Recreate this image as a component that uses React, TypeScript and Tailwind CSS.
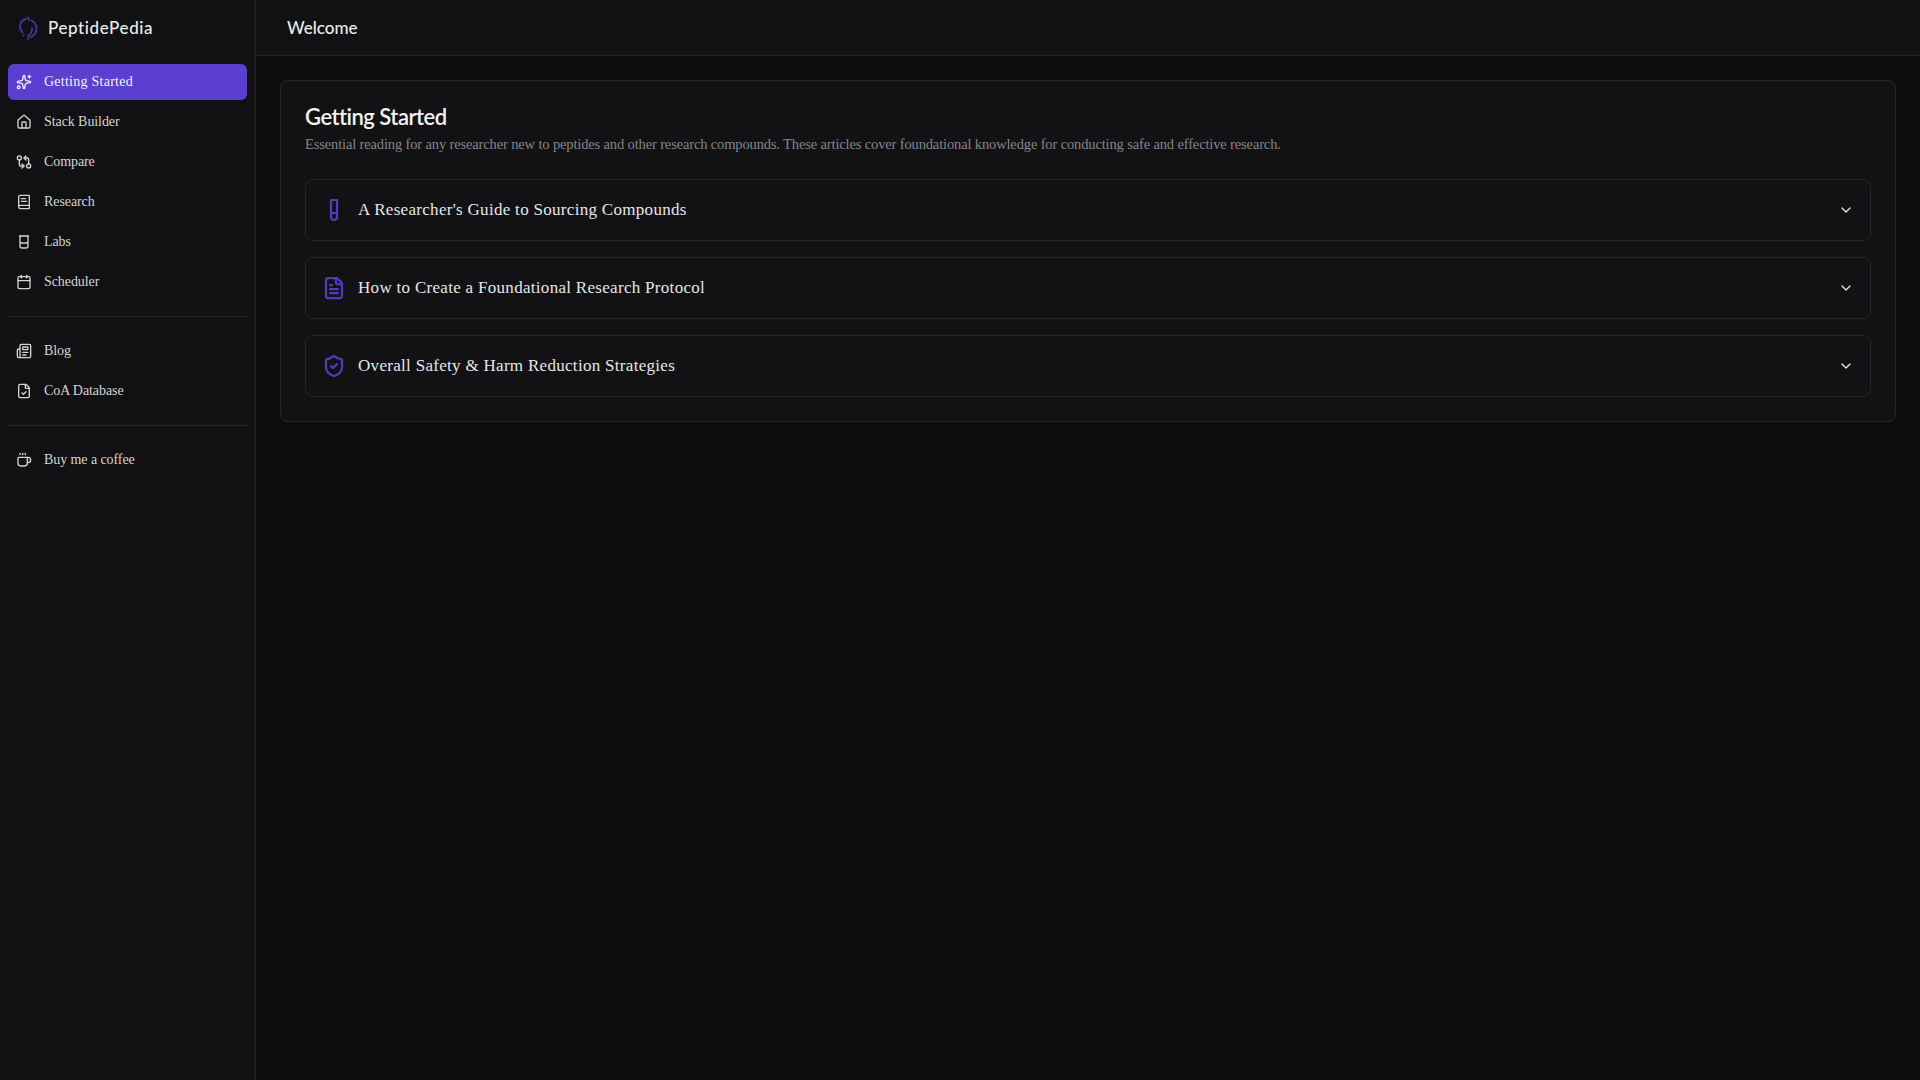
import {
  BookText,
  ChevronDown,
  Coffee,
  FileCheck,
  FileText,
  GitCompareArrows,
  House,
  Newspaper,
  Calendar,
  ShieldCheck,
  Sparkles,
} from 'lucide-react'

const serif = 'font-["Liberation_Serif",serif]'
const display = 'font-["Lato",sans-serif]'

function LabsIcon({ className }: { className?: string }) {
  return (
    <svg viewBox="0 0 16 16" fill="none" stroke="currentColor" strokeWidth="1.3" className={className}>
      <path d="M3 2h10M4 2v10a2 2 0 0 0 2 2h4a2 2 0 0 0 2-2V2M4 9h8" />
    </svg>
  )
}

function TubeIcon() {
  return (
    <svg viewBox="0 0 10 24" fill="none" stroke="currentColor" strokeWidth="2.2" className="w-[10px] h-[24px] text-[#4f3bbd]">
      <path d="M1 2h8M2 2v17a3 3 0 0 0 6 0V2M2 15h6" />
    </svg>
  )
}

function Logo() {
  return (
    <svg viewBox="0 0 20 24" fill="none" stroke="#45359f" strokeWidth="1.9" strokeLinecap="round" className="w-[20px] h-[24px]">
      <path d="M8 3C4 4 2 7 2 10.500c0 2.500 1 4.500 2.500 6" />
      <path d="M10 1.500 11 4" />
      <path d="M13.500 4.500c3 1.500 5 4.500 5 8 0 4.500-3 7.500-6.500 9" />
      <path d="M14 12c.5 3-1.500 6-4 8" />
      <path d="M5.500 19.500h.01M10 23v-.5" />
    </svg>
  )
}

const primaryNav = [
  { icon: Sparkles, label: 'Getting Started', active: true },
  { icon: House, label: 'Stack Builder' },
  { icon: GitCompareArrows, label: 'Compare' },
  { icon: BookText, label: 'Research' },
  { icon: LabsIcon, label: 'Labs' },
  { icon: Calendar, label: 'Scheduler' },
]

const articles = [
  { icon: <TubeIcon />, title: "A Researcher's Guide to Sourcing Compounds" },
  { icon: <FileText size={24} strokeWidth={2.25} className="text-[#4f3bbd]" />, title: 'How to Create a Foundational Research Protocol' },
  { icon: <ShieldCheck size={24} strokeWidth={2.25} className="text-[#4f3bbd]" />, title: 'Overall Safety & Harm Reduction Strategies' },
]

function NavItem({ icon: Icon, label, active }: { icon: any; label: string; active?: boolean }) {
  return (
    <div
      className={`flex items-center gap-[12px] h-[36px] px-[8px] rounded-md text-[14px] ${serif} ${
        active ? 'bg-[#5a3fd0] text-[#f2f2f2]' : 'text-[#d4d4d4]'
      }`}
    >
      <Icon size={16} className="w-[16px] h-[16px] shrink-0" />
      <span className={`pb-[2px] ${active ? 'tracking-[0.25px]' : 'tracking-[-0.08px]'}`}>{label}</span>
    </div>
  )
}

export default function App() {
  return (
    <div className="flex h-screen bg-[#0c0c0e] overflow-hidden">
      {/* Sidebar */}
      <aside className="w-[256px] shrink-0 bg-[#111113] border-r border-[#222226]">
        <div className="flex items-center gap-[10px] h-[55px] pl-[18px]">
          <Logo />
          <span className={`text-[17px] font-medium tracking-[0.6px] text-[#ececec] ${display}`}>PeptidePedia</span>
        </div>
        <nav className="px-[8px] pt-[9px]">
          <div className="flex flex-col gap-[4px]">
            {primaryNav.map((item) => (
              <NavItem key={item.label} {...item} />
            ))}
          </div>
          <div className="border-t border-[#26262a] mt-[16px] mb-[16px]" />
          <div className="flex flex-col gap-[4px]">
            <NavItem icon={Newspaper} label="Blog" />
            <NavItem icon={FileCheck} label="CoA Database" />
          </div>
          <div className="border-t border-[#26262a] mt-[16px] mb-[16px]" />
          <NavItem icon={Coffee} label="Buy me a coffee" />
        </nav>
      </aside>

      {/* Main */}
      <div className="flex-1 flex flex-col min-w-0">
        <header className="h-[56px] shrink-0 flex items-center px-[31px] bg-[#111113] border-b border-[#222226]">
          <h1 className={`text-[17px] font-medium text-[#ececec] ${display}`}>Welcome</h1>
        </header>
        <main className="p-[24px]">
          <section className="bg-[#121214] border border-[#26262a] rounded-lg p-[24px]">
            <h2 className={`text-[22px] leading-[24px] font-semibold tracking-[-0.5px] text-[#f2f2f2] ${display}`}>
              Getting Started
            </h2>
            <p className={`text-[14.5px] leading-[20px] tracking-[-0.14px] text-[#84848a] mt-[5px] ${serif}`}>
              Essential reading for any researcher new to peptides and other research compounds. These articles cover foundational knowledge for conducting safe and effective research.
            </p>
            <div className="flex flex-col gap-[16px] mt-[25px]">
              {articles.map((a) => (
                <div key={a.title} className="flex items-center h-[62px] px-[16px] border border-[#26262a] rounded-lg">
                  <div className="w-[24px] flex justify-center shrink-0">{a.icon}</div>
                  <span className={`ml-[12px] flex-1 text-[17px] tracking-[0.3px] text-[#e6e6e6] ${serif}`}>{a.title}</span>
                  <ChevronDown size={16} className="text-[#e6e6e6]" />
                </div>
              ))}
            </div>
          </section>
        </main>
      </div>
    </div>
  )
}
